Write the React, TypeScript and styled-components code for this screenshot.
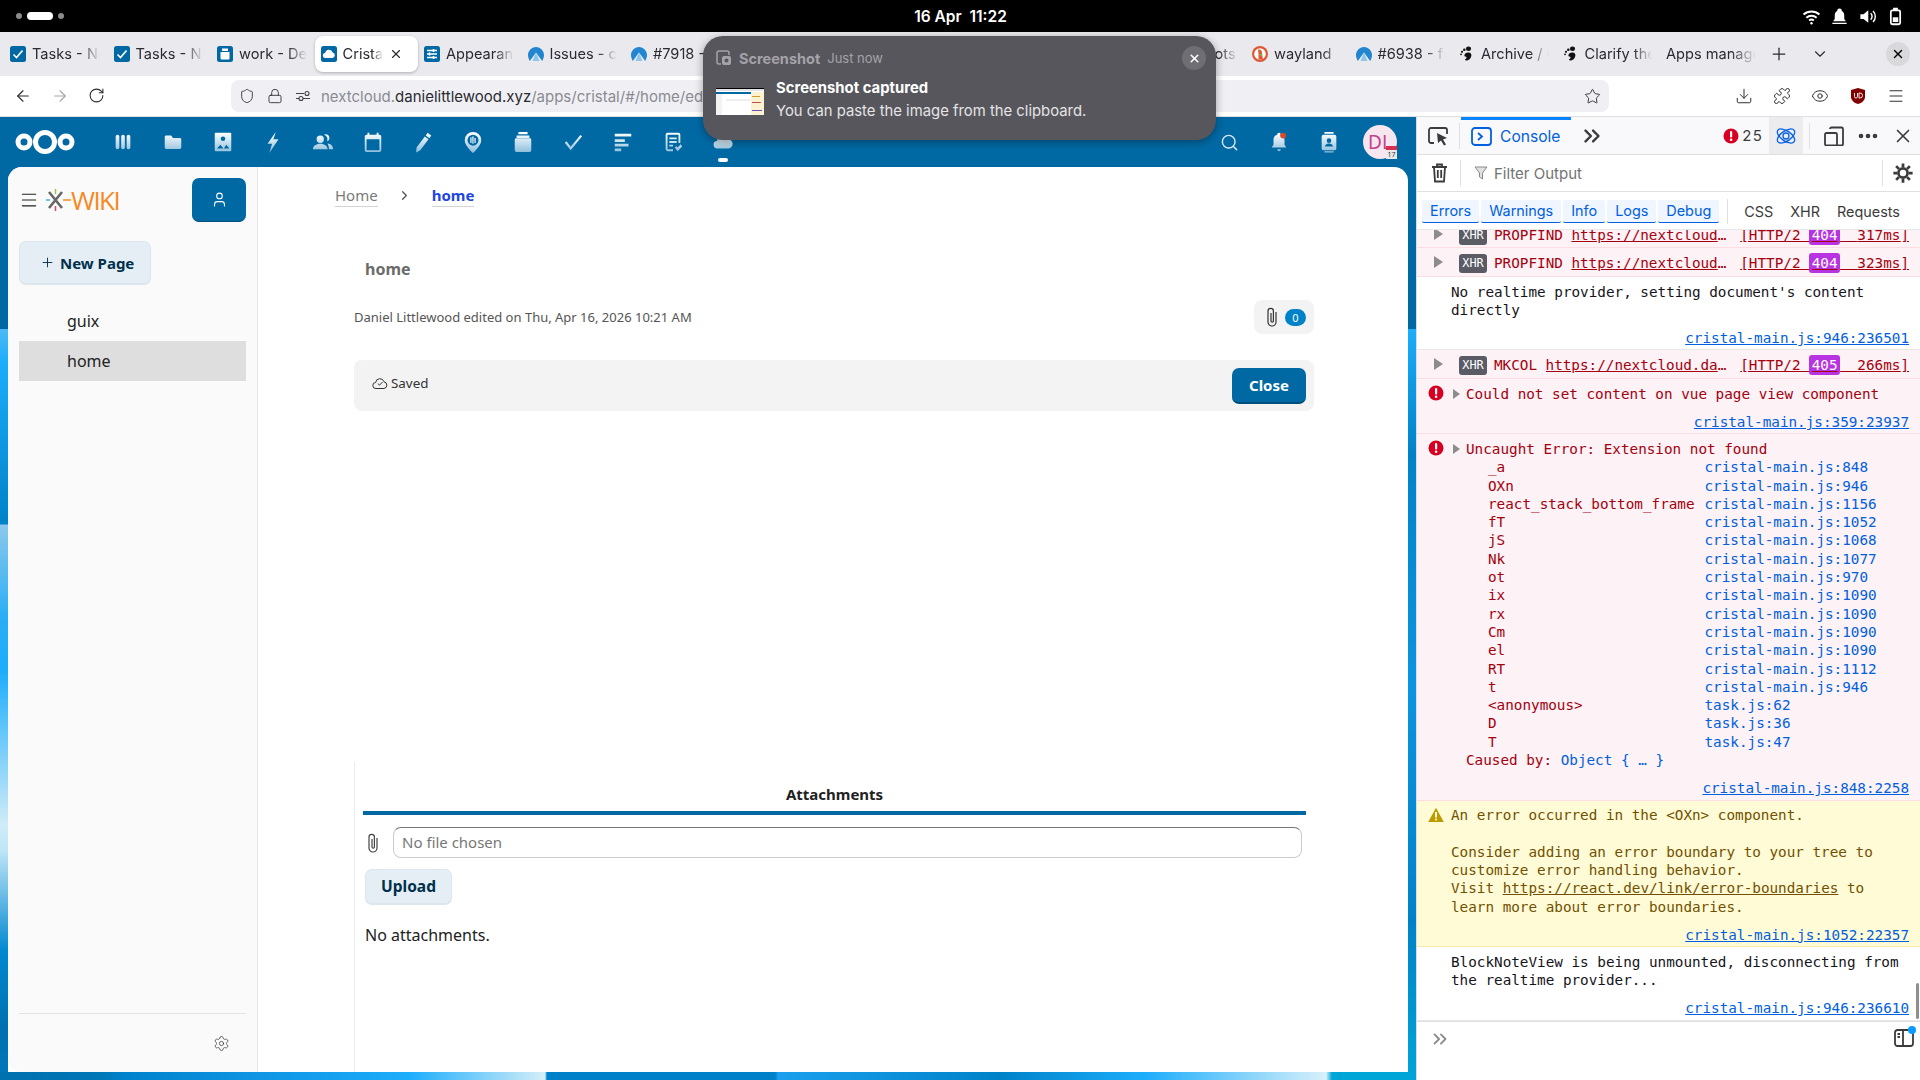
import React from 'react';
import styled, { createGlobalStyle } from 'styled-components';
import {
  ArrowLeft,
  ArrowRight,
  RotateCw,
  Shield,
  Lock,
  Star,
  Download,
  Puzzle,
  Eye,
  Menu,
  X,
  Plus,
  ChevronDown,
  ChevronRight,
  ChevronsRight,
  Settings,
  User,
  Search,
} from 'lucide-react';

const GlobalStyle = createGlobalStyle`
  html, body { margin: 0; padding: 0; width: 1920px; height: 1080px; overflow: hidden; background: #000; }
  * { box-sizing: border-box; }
`;

const UI_FONT = `Inter, "Noto Sans", sans-serif`;
const NC_FONT = `"Noto Sans", "Open Sans", sans-serif`;
const MONO_FONT = `"DejaVu Sans Mono", "Liberation Mono", monospace`;

const Screen = styled.div`
  width: 1920px;
  height: 1080px;
  display: flex;
  flex-direction: column;
  position: relative;
  overflow: hidden;
  font-family: ${UI_FONT};
`;

/* gnome bar */
const TopBar = styled.div`
  height: 32px;
  flex: none;
  background: #000;
  color: #fff;
  display: grid;
  grid-template-columns: 1fr auto 1fr;
  align-items: center;
  padding: 0 15px 0 16px;
`;
const Workspaces = styled.div`
  display: flex;
  align-items: center;
  gap: 5px;
`;
const WsDot = styled.span<{ $on?: boolean }>`
  width: ${p => (p.$on ? '26px' : '6px')};
  height: ${p => (p.$on ? '8px' : '6px')};
  border-radius: 4px;
  background: ${p => (p.$on ? '#fff' : '#8a8a8a')};
`;
const Clock = styled.div`
  font-size: 15.5px;
  font-weight: 600;
  white-space: pre;
`;
const Tray = styled.div`
  display: flex;
  justify-content: flex-end;
  align-items: center;
  gap: 9px;
`;

/* browser chrome */
const TabStrip = styled.div`
  height: 44px;
  flex: none;
  background: #eaeaee;
  display: flex;
  align-items: center;
  padding-left: 4px;
  position: relative;
`;
const Tab = styled.div<{ $active?: boolean }>`
  width: 103.5px;
  height: 36px;
  flex: none;
  display: flex;
  align-items: center;
  gap: 6px;
  padding: 0 ${p => (p.$active ? '15px' : '8px')} 0 6px;
  border-radius: 8px;
  font-size: 14.6px;
  color: #2b2a33;
  background: ${p => (p.$active ? '#fff' : 'transparent')};
  box-shadow: ${p => (p.$active ? '0 1px 3px rgba(0,0,0,.25)' : 'none')};
`;
const TabTitle = styled.span`
  flex: 1;
  overflow: hidden;
  white-space: nowrap;
  mask-image: linear-gradient(to right, #000 72%, transparent 100%);
`;
const Favicon = styled.span`
  width: 16px;
  height: 16px;
  flex: none;
  display: flex;
`;
const TabActions = styled.div`
  display: flex;
  align-items: center;
  color: #2b2a33;
  margin-left: 5px;
  gap: 22px;
`;
const CloseWindow = styled.span`
  position: absolute;
  right: 10px;
  top: 10px;
  width: 24px;
  height: 24px;
  border-radius: 50%;
  background: #d9d9dc;
  display: flex;
  align-items: center;
  justify-content: center;
`;

const NavBar = styled.div`
  height: 41px;
  flex: none;
  background: #fff;
  border-bottom: 1px solid #e0e0e4;
  display: flex;
  align-items: center;
  color: #2b2a33;
`;
const NavButtons = styled.div`
  width: 231px;
  padding-left: 14px;
  display: flex;
  gap: 19px;
  flex: none;
`;
const UrlBar = styled.div`
  width: 1378px;
  height: 32px;
  background: #f0f0f4;
  border-radius: 8px;
  display: flex;
  align-items: center;
  padding: 0 8px 0 8px;
  gap: 12px;
  flex: none;
`;
const UrlText = styled.div`
  flex: 1;
  font-size: 15px;
  color: #8a8a92;
  margin-left: -2px;
  b {
    font-weight: 400;
    color: #2b2a33;
  }
`;
const NavRight = styled.div`
  flex: 1;
  display: flex;
  align-items: center;
  padding-left: 126px;
  gap: 20px;
`;

const Body = styled.div`
  flex: 1;
  display: flex;
  min-height: 0;
`;

/* nextcloud */
const Wallpaper = styled.div`
  width: 1416px;
  flex: none;
  display: flex;
  flex-direction: column;
  background:
    linear-gradient(#0069a3, #0069a3) top / 100% 212px no-repeat,
    linear-gradient(90deg, #0070ae 0, #0076b6 100px, #0082cc 125px, #0f95e4 260px, #1cadfb 409px, #d5eef8 545px, #0080c8 547px, #0080c8 775px, #1aa0ee 778px, #0082c8 1000px, #1cadfb 1144px, #d8f0fa 1326px, #00a5d8 1332px) bottom / 100% 8px no-repeat,
    linear-gradient(180deg, #4ab9f5 215px, #1cadfb 245px, #0082c8 407px, #8cc8ec 408px, #2aaef5 500px, #1cadfb 553px, #d0ecf8 708px, #bfe6f7 733px, #0088d0 835px, #0070ae 913px, #0078bc 100%) left / 8px 100% no-repeat,
    linear-gradient(180deg, #1cadfb 212px, #0082c8 336px, #0d94e0 571px, #0082c8 805px, #00a5d8 100%) right / 8px 100% no-repeat,
    #fff;
`;
const NcHeader = styled.div`
  height: 50px;
  flex: none;
  display: flex;
  align-items: center;
  padding-left: 15px;
`;
const AppIcons = styled.div`
  display: flex;
  margin-left: 23px;
`;
const AppIcon = styled.span`
  width: 50px;
  height: 50px;
  display: flex;
  align-items: center;
  justify-content: center;
  position: relative;
`;
const ActiveDot = styled.span`
  position: absolute;
  left: 20px;
  bottom: 5px;
  width: 10px;
  height: 4px;
  border-radius: 2px;
  background: #fff;
`;
const HeaderRight = styled.div`
  margin-left: auto;
  display: flex;
  align-items: center;
  padding-right: 19px;
`;
const Avatar = styled.span`
  width: 34px;
  height: 34px;
  margin-left: 9px;
  border-radius: 50%;
  background: #f6e6ef;
  color: #c2438f;
  font: 400 19px ${NC_FONT};
  display: flex;
  align-items: center;
  justify-content: center;
  position: relative;
`;
const AvatarBadge = styled.span`
  position: absolute;
  right: 0;
  bottom: 0;
  width: 11px;
  height: 13px;
  background: linear-gradient(#d9304f 0 4px, #e9e9e9 4px);
  color: #333;
  font-size: 7px;
  line-height: 17px;
  text-align: center;
`;

const Panel = styled.div`
  height: 905px;
  margin: 0 8px;
  border-radius: 14px;
  background: #fff;
  overflow: hidden;
  display: flex;
`;

const Sidebar = styled.aside`
  width: 250px;
  flex: none;
  background: #fafafa;
  border-right: 1px solid #e6e6e6;
  padding: 11px 11px 0;
  display: flex;
  flex-direction: column;
  font-family: ${NC_FONT};
`;
const SideTop = styled.div`
  display: flex;
  align-items: center;
  height: 44px;
  color: #222;
`;
const Logo = styled.div`
  display: flex;
  align-items: center;
  margin-left: 7px;
  color: #f6891f;
  font: 400 26px/1 "Open Sans", ${NC_FONT};
  letter-spacing: -1.6px;
`;
const UserButton = styled.button`
  margin-left: auto;
  width: 54px;
  height: 44px;
  border: 0;
  border-bottom: 1px solid #004f7b;
  border-radius: 7px;
  background: #0069a3;
  color: #fff;
  display: flex;
  align-items: center;
  justify-content: center;
`;
const SoftButton = styled.button`
  display: flex;
  align-items: center;
  gap: 5px;
  border: 1px solid #dce6ef;
  border-bottom-width: 2px;
  border-radius: 7px;
  background: #e6eef5;
  color: #00304c;
  font: 700 15px ${NC_FONT};
`;
const NewPage = styled(SoftButton)`
  width: 132px;
  height: 44px;
  margin-top: 19px;
  padding-left: 20px;
`;
const TreeList = styled.div`
  margin-top: 16px;
`;
const TreeItem = styled.div<{ $selected?: boolean }>`
  height: 40px;
  line-height: 40px;
  padding-left: 48px;
  font-size: 16px;
  color: #222;
  background: ${p => (p.$selected ? '#dedede' : 'transparent')};
`;
const SideFooter = styled.div`
  margin-top: auto;
  height: 59px;
  border-top: 1px solid #e4e4e4;
  display: flex;
  justify-content: flex-end;
  align-items: center;
  padding: 0 16px 0 0;
  color: #333;
`;

const Main = styled.main`
  flex: 1;
  min-width: 0;
  display: flex;
  flex-direction: column;
  padding: 16px 94px 0 96px;
  font-family: ${NC_FONT};
  color: #222;
`;
const Crumbs = styled.nav`
  display: flex;
  align-items: center;
  margin-left: -19px;
  height: 24px;
  font-size: 15px;
`;
const Crumb = styled.span<{ $current?: boolean }>`
  color: ${p => (p.$current ? '#2146e0' : '#7a7a7a')};
  font-weight: ${p => (p.$current ? 700 : 400)};
  border-bottom: 1px solid #d4d4d4;
  line-height: 22px;
`;
const CrumbSep = styled.span`
  width: 54px;
  color: #555;
  display: flex;
  justify-content: center;
`;
const PageTitle = styled.h1`
  margin: 50px 0 0 11px;
  font-size: 16px;
  line-height: 24px;
  font-weight: 700;
  color: #6b6b6b;
`;
const MetaRow = styled.div`
  margin-top: 19px;
  height: 34px;
  display: flex;
  align-items: center;
  justify-content: space-between;
  font-size: 13px;
  color: #555;
`;
const AttachPill = styled.div`
  width: 60px;
  height: 34px;
  border-radius: 8px;
  background: #f3f3f3;
  display: flex;
  align-items: center;
  padding-left: 11px;
  gap: 6px;
  color: #333;
`;
const CountBadge = styled.span`
  width: 21px;
  height: 17px;
  border-radius: 9px;
  background: #0082c9;
  color: #fff;
  font-size: 11px;
  display: flex;
  align-items: center;
  justify-content: center;
`;
const SaveBar = styled.div`
  margin-top: 26px;
  height: 51px;
  border-radius: 8px;
  background: #f3f3f3;
  display: flex;
  align-items: center;
  padding: 0 8px 0 18px;
`;
const Saved = styled.span`
  display: flex;
  align-items: center;
  gap: 3px;
  font-size: 13.4px;
  color: #333;
  margin-top: -5px;
`;
const CloseButton = styled.button`
  margin-left: auto;
  width: 74px;
  height: 36px;
  border: 0;
  border-bottom: 2px solid #004f7b;
  border-radius: 7px;
  background: #0069a3;
  color: #fff;
  font: 700 15px ${NC_FONT};
`;
const Attachments = styled.section`
  margin-top: 351px;
  flex: 1;
  border-left: 1px solid #ececec;
  padding: 20px 8px 0 8px;
`;
const AttachTitle = styled.div`
  height: 24px;
  line-height: 24px;
  text-align: center;
  font-size: 15px;
  font-weight: 700;
  margin-bottom: 5px;
`;
const TabLine = styled.div`
  height: 4px;
  background: #0069a3;
`;
const FileRow = styled.div`
  margin-top: 12px;
  display: flex;
  align-items: center;
  color: #444;
  padding-left: 3px;
`;
const FileInput = styled.div`
  margin-left: 13px;
  width: 909px;
  height: 31px;
  border: 1px solid #ccc;
  border-top-color: #777;
  border-radius: 8px;
  padding-left: 8px;
  font-size: 15px;
  line-height: 29px;
  color: #777;
`;
const Upload = styled(SoftButton)`
  margin: 11px 0 0 2px;
  width: 87px;
  height: 36px;
  padding: 0 0 1px;
  justify-content: center;
  font-size: 15.5px;
`;
const EmptyNote = styled.div`
  margin: 18px 0 0 2px;
  font-size: 16px;
  line-height: 24px;
`;

/* devtools */
const Devtools = styled.div`
  flex: 1;
  min-width: 0;
  display: flex;
  flex-direction: column;
  background: #fff;
  border-left: 1px solid #dcdcdc;
  color: #3b3b3b;
  position: relative;
`;
const DevBar = styled.div`
  height: 38px;
  flex: none;
  background: #f9f9fb;
  border-bottom: 1px solid #e0e0e2;
  display: flex;
  align-items: center;
  padding-left: 10px;
`;
const DevSep = styled.span<{ $left?: number; $right?: number }>`
  width: 1px;
  height: 26px;
  background: #e0e0e2;
  flex: none;
  margin-left: ${p => p.$left ?? 0}px;
  margin-right: ${p => p.$right ?? 0}px;
`;
const ConsoleTab = styled.div`
  width: 110px;
  height: 37px;
  border-top: 3px solid #0a84ff;
  margin-left: 1px;
  display: flex;
  align-items: center;
  gap: 8px;
  padding: 0 0 2px 10px;
  color: #0060df;
  font-size: 15.6px;
`;
const MoreTabs = styled.span`
  display: flex;
  margin-left: 8px;
`;
const ErrorCount = styled.div`
  margin-left: auto;
  display: flex;
  align-items: center;
  gap: 3px;
  font-size: 15px;
  letter-spacing: 1.2px;
`;
const AtomButton = styled.span`
  width: 34px;
  height: 37px;
  margin: 0 6px;
  background: #ececef;
  display: flex;
  align-items: center;
  justify-content: center;
`;
const DevTools2 = styled.div`
  display: flex;
  align-items: center;
  gap: 14px;
  padding: 0 6px 0 14px;
`;
const FilterBar = styled.div`
  height: 37px;
  flex: none;
  border-bottom: 1px solid #e0e0e2;
  display: flex;
  align-items: center;
  padding-left: 14px;
  gap: 12px;
`;
const FilterText = styled.span`
  flex: 1;
  display: flex;
  align-items: center;
  gap: 6px;
  font-size: 15px;
  color: #737373;
  padding-left: 1px;
`;
const GearWrap = styled.span`
  display: flex;
  margin-right: 6px;
`;
const LevelBar = styled.div`
  height: 37px;
  flex: none;
  display: flex;
  align-items: center;
  padding: 1px 5px 0;
  gap: 2px;
  font-size: 14.4px;
`;
const Level = styled.span`
  height: 23px;
  padding: 0 8px;
  line-height: 22px;
  border-radius: 2px;
  background: #f0f6ff;
  color: #0060df;
  border-bottom: 1px solid #0060df;
`;
const Net = styled.span<{ $gap?: number }>`
  margin-left: ${p => p.$gap ?? 15}px;
`;
const LevelSep = styled.span`
  width: 1px;
  height: 25px;
  background: #e0e0e2;
  margin: 0 0 0 6px;
`;
const Output = styled.div`
  flex: 1;
  min-height: 0;
  overflow: hidden;
  font: 14.3px/18.3px ${MONO_FONT};
  border-top: 1px solid #e8e8ea;
  position: relative;
`;
const Row = styled.div<{ $kind?: 'error' | 'warn' | 'log' }>`
  background: ${p => (p.$kind === 'error' ? '#fdf2f5' : p.$kind === 'warn' ? '#fffbd6' : '#fff')};
  color: ${p => (p.$kind === 'error' ? '#a4000f' : p.$kind === 'warn' ? '#715100' : '#15141a')};
  border-bottom: 1px solid ${p => (p.$kind === 'error' ? '#fbdde3' : p.$kind === 'warn' ? '#f6eca8' : '#e8e8ea')};
  position: relative;
  padding: 5.5px 11px 0 34px;
`;
const XhrRow = styled(Row)<{ $clipped?: boolean }>`
  height: ${p => (p.$clipped ? 18 : 29)}px;
  display: flex;
  align-items: flex-end;
  padding: 0 11px ${p => (p.$clipped ? 3 : 4)}px 17px;
  white-space: pre;
  overflow: hidden;
`;
const Twisty = styled.span`
  width: 0;
  height: 0;
  border-left: 9px solid #8c8c8c;
  border-top: 6px solid transparent;
  border-bottom: 6px solid transparent;
  margin: 0 16px 4px 0;
  flex: none;
`;
const XhrTag = styled.span`
  background: #5b5b66;
  color: #fff;
  border-radius: 3px;
  width: 28px;
  height: 19px;
  line-height: 19px;
  text-align: center;
  font-size: 11.9px;
  margin: 0 7px -1px 0;
  flex: none;
`;
const XhrUrl = styled.span`
  flex: 1;
  min-width: 0;
  overflow: hidden;
  text-overflow: ellipsis;
  text-decoration: underline;
  margin-left: 8.5px;
  margin-right: 12px;
`;
const Status = styled.span`
  text-decoration: underline;
  flex: none;
`;
const Code = styled.span`
  background: #b833e1;
  color: #fff;
  border-radius: 3px;
  padding: 2px 2.6px;
`;
const Msg = styled.div`
  white-space: pre-wrap;
`;
const ErrorLine = styled.div`
  padding-left: 15px;
  position: relative;
`;
const SmallTwisty = styled.span`
  position: absolute;
  left: 2px;
  top: 4px;
  width: 0;
  height: 0;
  border-left: 7px solid #8c8c8c;
  border-top: 5px solid transparent;
  border-bottom: 5px solid transparent;
`;
const StateIcon = styled.span`
  position: absolute;
  left: 11px;
  top: 6px;
  width: 16px;
  height: 16px;
  display: flex;
`;
const Source = styled.a`
  display: block;
  text-align: right;
  color: #0060df;
  text-decoration: underline;
  margin-top: 10px;
  padding-bottom: 2px;
`;
const Stack = styled.div`
  display: grid;
  grid-template-columns: 216.5px auto;
  justify-content: start;
  padding-left: 37px;
`;
const FrameFile = styled.span`
  color: #0060df;
`;
const Caused = styled.div`
  padding-left: 15px;
`;
const Blue = styled.span`
  color: #0060df;
`;
const PlainLink = styled.span`
  text-decoration: underline;
`;
const Scrollbar = styled.span`
  position: absolute;
  right: 1px;
  bottom: 2px;
  width: 3px;
  height: 36px;
  border-radius: 2px;
  background: #8f8f8f;
`;
const PromptBar = styled.div`
  height: 59px;
  flex: none;
  border-top: 1px solid #e0e0e2;
  display: flex;
  align-items: flex-start;
  justify-content: space-between;
  padding: 6px 6px 0 12px;
  color: #8a8a8a;
`;
const SplitIcon = styled.span`
  position: relative;
  display: flex;
  margin-top: 1px;
  color: #3b3b3b;
`;
const BlueDot = styled.span`
  position: absolute;
  right: -2px;
  top: -3px;
  width: 8px;
  height: 8px;
  border-radius: 50%;
  background: #0a9bff;
`;

/* desktop notification */
const Toast = styled.div`
  position: absolute;
  left: 703px;
  top: 36px;
  width: 513px;
  height: 104px;
  border-radius: 20px;
  background: #57565c;
  box-shadow: 0 2px 8px rgba(0, 0, 0, 0.35);
  padding: 13px 10px 0 13px;
  color: #fff;
`;
const ToastHead = styled.div`
  display: flex;
  align-items: center;
  height: 18px;
  color: #a4a3a9;
  gap: 7px;
`;
const ToastApp = styled.span`
  font-size: 14.5px;
  font-weight: 700;
`;
const ToastTime = styled.span`
  font-size: 13px;
`;
const ToastClose = styled.span`
  position: absolute;
  right: 10px;
  top: 10px;
  width: 24px;
  height: 24px;
  border-radius: 50%;
  background: #6f6e74;
  display: flex;
  align-items: center;
  justify-content: center;
`;
const ToastBody = styled.div`
  display: flex;
  align-items: flex-start;
  gap: 12px;
  margin-top: 10px;
`;
const Thumb = styled.svg`
  margin-top: 11px;
  flex: none;
`;
const ToastText = styled.div`
  font-size: 14.85px;
  line-height: 23px;
  color: #e4e4e6;
  b {
    display: block;
    color: #fff;
    font-weight: 700;
  }
`;

const HeaderDefs = () => (
  <svg width="0" height="0" style={{ position: 'absolute' }}>
    <defs>
      <linearGradient id="hdr" gradientUnits="userSpaceOnUse" x1="0" y1="2" x2="0" y2="23">
        <stop offset="0" stopColor="#ffffff" />
        <stop offset="1" stopColor="#8fbfdc" />
      </linearGradient>
    </defs>
  </svg>
);

const Ico = ({ children, size = 24 }: { children: React.ReactNode; size?: number }) => (
  <svg width={size} height={size} viewBox="0 0 24 24" fill="url(#hdr)">
    {children}
  </svg>
);

const appIcons: React.ReactNode[] = [
  <path key="d" d="M4 6a2 2 0 0 1 4 0v12a2 2 0 0 1-4 0zM10 6a2 2 0 0 1 4 0v12a2 2 0 0 1-4 0zM16 6a2 2 0 0 1 4 0v12a2 2 0 0 1-4 0z" />,
  <path key="f" d="M3 6.500C3 5.700 3.700 5 4.500 5H10l2 2.500h7.500c.8 0 1.500.7 1.500 1.500V18c0 .8-.7 1.500-1.500 1.500h-15C3.700 19.500 3 18.800 3 18z" />,
  <path key="p" fillRule="evenodd" d="M4 2h16a1 1 0 0 1 1 1v18a1 1 0 0 1-1 1H4a1 1 0 0 1-1-1V3a1 1 0 0 1 1-1zm8 4a2.500 2.500 0 1 0 0 5 2.500 2.500 0 0 0 0-5zm3.500 9-2.500 4h6zm-6.500 0-3.500 4h7z" />,
  <path key="a" d="M15 1 6 14h5l-3 10 10-15h-5.500z" />,
  <path key="c" d="M9 5a4 4 0 1 1 0 8 4 4 0 0 1 0-8zm6-1.500a4 4 0 0 1 1.500 7.700A6 6 0 0 0 13 4zM1 20c0-3.500 3.500-6 8-6s8 2.500 8 6zm16-6.500c3.500.3 6 2.500 6 6.500h-4.500c0-2.500-.5-4.500-1.500-6.500z" />,
  <path key="k" fillRule="evenodd" d="M6 2h2v2h8V2h2v2h1a2 2 0 0 1 2 2v15a2 2 0 0 1-2 2H5a2 2 0 0 1-2-2V6a2 2 0 0 1 2-2h1zM5 9v12h14V9z" />,
  <path key="n" d="M17 2l4 3-2 3-4-3zM14 6l4 3-9 12-4.500 2.500L5 18z" />,
  <path key="m" fillRule="evenodd" d="M12 1a9 9 0 0 1 9 9c0 5-5 10-9 14-4-4-9-9-9-14a9 9 0 0 1 9-9zm0 3a6 6 0 1 0 0 12 6 6 0 0 0 0-12zM9 7h1.500v6H9zm2.200-1h1.500v8h-1.500zm2.300 1.500H15V13h-1.500z" />,
  <path key="s" d="M7 1h10v2.500H7zM5 5h14v2.500H5zM3 9.500a1.500 1.500 0 0 1 1.500-1.500h15A1.500 1.500 0 0 1 21 9.500V21a2 2 0 0 1-2 2H5a2 2 0 0 1-2-2z" />,
  <path key="t" fill="none" stroke="url(#hdr)" strokeWidth="2.400" d="M4 12l5.500 7L21 5" />,
  <path key="x" d="M3 3h18v3H3zM3 9h11v3H3zM3 14h15v3H3zM3 19h7v3H3z" />,
  <path key="o" fillRule="evenodd" d="M6 2h12a2 2 0 0 1 2 2v9h-2V4H6v16h6v2H6a2 2 0 0 1-2-2V4a2 2 0 0 1 2-2zm2 5h8v2H8zm0 4h8v2H8zm0 4h4v2H8zm6 3 1.500-1.500 1.500 1.500 3.500-3.500L22 17l-5 5z" />,
];

const Tasks = () => (
  <svg viewBox="0 0 16 16" width="16" height="16">
    <rect width="16" height="16" rx="2.500" fill="#0069a3" />
    <path d="M3.500 8.500l3 3L12.500 4.500" fill="none" stroke="#fff" strokeWidth="1.600" />
  </svg>
);
const BlueJar = () => (
  <svg viewBox="0 0 16 16" width="16" height="16">
    <rect width="16" height="16" rx="2.500" fill="#0069a3" />
    <path d="M5 2.500h6V5H5zM3.500 6h9v6.500a1 1 0 0 1-1 1h-7a1 1 0 0 1-1-1z" fill="#fff" />
  </svg>
);
const BlueCloud = () => (
  <svg viewBox="0 0 16 16" width="16" height="16">
    <rect width="16" height="16" rx="2.500" fill="#0069a3" />
    <path d="M4.500 12a2.500 2.500 0 0 1-.3-5A3.800 3.800 0 0 1 11.600 6.500 2.800 2.800 0 0 1 11.500 12z" fill="#fff" />
  </svg>
);
const BlueSliders = () => (
  <svg viewBox="0 0 16 16" width="16" height="16">
    <rect width="16" height="16" rx="2.500" fill="#0069a3" />
    <path d="M3 4.500h10M3 8h10M3 11.500h10" stroke="#fff" strokeWidth="1.300" />
    <path d="M9.500 3v3M5.500 6.500v3M9.500 10v3" stroke="#fff" strokeWidth="1.600" />
  </svg>
);
const Arch = () => (
  <svg viewBox="0 0 16 16" width="16" height="16">
    <path d="M8 1C3.500 1 0 5 0 9c0 2 .7 4 1.800 6L8 6.500 14.200 15C15.300 13 16 11 16 9c0-4-3.500-8-8-8z" fill="#2185d0" />
    <path d="M8 6.500 4.500 15h7z" fill="#8ec6ee" />
  </svg>
);
const Duck = () => (
  <svg viewBox="0 0 16 16" width="16" height="16">
    <circle cx="8" cy="8" r="8" fill="#de5833" />
    <circle cx="8" cy="8" r="5.800" fill="#fff" />
    <path d="M6 3.500c3-.5 4.500 1.500 4 5l1 5H6.500L6.500 8z" fill="#de5833" />
    <path d="M7 8h4L9 10z" fill="#6fbf3a" />
  </svg>
);
const Gnome = () => (
  <svg viewBox="0 0 16 16" width="16" height="16">
    <path d="M9 6.500c3 0 4 2 3 4.500-.8 2-2.500 3.500-4.500 3.500-1.500 0-2-1-1-1.500 2-1 1-2.500-.5-2.500C5 10.500 5 6.500 9 6.500z" fill="#111" />
    <ellipse cx="9.500" cy="2.800" rx="2.600" ry="2.200" fill="#111" />
    <circle cx="5.300" cy="3.800" r="1.300" fill="#111" />
    <circle cx="3" cy="5.800" r="1.100" fill="#111" />
    <circle cx="2" cy="8.300" r=".9" fill="#111" />
  </svg>
);

const tabs: { title?: string; icon?: React.ReactNode; active?: boolean }[] = [
  { title: 'Tasks - Nextcloud', icon: <Tasks /> },
  { title: 'Tasks - Nextcloud', icon: <Tasks /> },
  { title: 'work - Deck', icon: <BlueJar /> },
  { title: 'Cristal', icon: <BlueCloud />, active: true },
  { title: 'Appearance', icon: <BlueSliders /> },
  { title: 'Issues - codeberg', icon: <Arch /> },
  { title: '#7918 - fix', icon: <Arch /> },
  {},
  {},
  {},
  {},
  { title: 'Web bots', icon: <Tasks /> },
  { title: 'wayland', icon: <Duck /> },
  { title: '#6938 - fix', icon: <Arch /> },
  { title: 'Archive / GNOME', icon: <Gnome /> },
  { title: 'Clarify the', icon: <Gnome /> },
  { title: 'Apps management' },
];

const frames: [string, string][] = [
  ['_a', 'cristal-main.js:848'],
  ['OXn', 'cristal-main.js:946'],
  ['react_stack_bottom_frame', 'cristal-main.js:1156'],
  ['fT', 'cristal-main.js:1052'],
  ['jS', 'cristal-main.js:1068'],
  ['Nk', 'cristal-main.js:1077'],
  ['ot', 'cristal-main.js:970'],
  ['ix', 'cristal-main.js:1090'],
  ['rx', 'cristal-main.js:1090'],
  ['Cm', 'cristal-main.js:1090'],
  ['el', 'cristal-main.js:1090'],
  ['RT', 'cristal-main.js:1112'],
  ['t', 'cristal-main.js:946'],
  ['<anonymous>', 'task.js:62'],
  ['D', 'task.js:36'],
  ['T', 'task.js:47'],
];

const Paperclip = () => (
  <svg width="14" height="20" viewBox="0 0 14 20" fill="none" stroke="currentColor" strokeWidth="1.200">
    <path d="M11 5v10a4 4 0 0 1-8 0V4a2.700 2.700 0 0 1 5.400 0v10a1.200 1.200 0 0 1-2.400 0V6" />
  </svg>
);

const CloudCheck = () => (
  <svg width="16" height="14" viewBox="0 0 16 14" fill="none" stroke="#333" strokeWidth="1">
    <path d="M4 12.500a3 3 0 0 1-.4-6A4.300 4.300 0 0 1 12 5.800a3.400 3.400 0 0 1 0 6.700z" />
    <path d="M5.800 7.500l1.700 1.700 3-3.200" />
  </svg>
);

const ErrorDot = ({ size = 16 }: { size?: number }) => (
  <svg width={size} height={size} viewBox="0 0 16 16">
    <circle cx="8" cy="8" r="7.500" fill="#d70022" />
    <rect x="7" y="3" width="2.200" height="6.500" rx="1" fill="#fff" />
    <circle cx="8.100" cy="11.800" r="1.300" fill="#fff" />
  </svg>
);

const WarnIcon = () => (
  <svg width="16" height="16" viewBox="0 0 16 16">
    <path d="M8 .8 15.800 15H.2z" fill="#be9b00" />
    <rect x="7" y="5" width="2" height="5.500" fill="#fffbd6" />
    <circle cx="8" cy="12.500" r="1.100" fill="#fffbd6" />
  </svg>
);

const XhrLine = ({ method, url, code, ms, clipped }: { method: string; url: string; code: string; ms: string; clipped?: boolean }) => (
  <XhrRow $kind="error" $clipped={clipped}>
    <Twisty />
    <XhrTag>XHR</XhrTag>
    {method}
    <XhrUrl>{url}</XhrUrl>
    <Status>
      [HTTP/2 <Code>{code}</Code>  {ms}]
    </Status>
  </XhrRow>
);

export default function App() {
  return (
    <Screen>
      <GlobalStyle />
      <HeaderDefs />
      <TopBar>
        <Workspaces>
          <WsDot />
          <WsDot $on />
          <WsDot />
        </Workspaces>
        <Clock>16 Apr  11:22</Clock>
        <Tray>
          <svg width="19" height="19" viewBox="0 0 24 24" fill="none" stroke="#fff" strokeWidth="2.600">
            <path d="M2 9.500a15 15 0 0 1 20 0M5.500 13.500a10 10 0 0 1 13 0M9 17a5 5 0 0 1 6 0" />
            <circle cx="12" cy="20.500" r="1.500" fill="#fff" stroke="none" />
          </svg>
          <svg width="19" height="19" viewBox="0 0 24 24" fill="#fff">
            <path d="M12 2a3 3 0 0 1 3 3c2 1 3 3 3 6v4l2 3H4l2-3v-4c0-3 1-5 3-6a3 3 0 0 1 3-3zM3 20h18v1.500H3z" />
          </svg>
          <svg width="19" height="19" viewBox="0 0 24 24" fill="#fff">
            <path d="M3 9h4l6-5v16l-6-5H3z" />
            <path d="M16 8a6 6 0 0 1 0 8M19 5a10 10 0 0 1 0 14" fill="none" stroke="#fff" strokeWidth="1.800" />
          </svg>
          <svg width="19" height="19" viewBox="0 0 24 24">
            <path fillRule="evenodd" fill="#fff" d="M9 1h6v2h1a3 3 0 0 1 3 3v14a3 3 0 0 1-3 3H8a3 3 0 0 1-3-3V6a3 3 0 0 1 3-3h1zM8 5.500a.8.8 0 0 0-.8.800v13.400c0 .4.400.8.800.8h8c.4 0 .8-.4.8-.8V6.300a.8.8 0 0 0-.8-.8z" />
            <rect x="8.500" y="13" width="7" height="6" fill="#fff" />
          </svg>
        </Tray>
      </TopBar>

      <TabStrip>
        {tabs.map((t, i) => (
          <Tab key={i} $active={t.active}>
            {t.icon && <Favicon>{t.icon}</Favicon>}
            {t.title && <TabTitle>{t.title}</TabTitle>}
            {t.active && <X size={14} />}
          </Tab>
        ))}
        <TabActions>
          <Plus size={20} strokeWidth={1.500} />
          <ChevronDown size={18} strokeWidth={1.500} />
        </TabActions>
        <CloseWindow>
          <X size={14} strokeWidth={2.500} />
        </CloseWindow>
      </TabStrip>

      <NavBar>
        <NavButtons>
          <ArrowLeft size={18} strokeWidth={1.500} />
          <ArrowRight size={18} strokeWidth={1.500} color="#a8a8ae" />
          <RotateCw size={17} strokeWidth={1.500} />
        </NavButtons>
        <UrlBar>
          <Shield size={16} strokeWidth={1.300} />
          <Lock size={16} strokeWidth={1.300} />
          <svg width="16" height="16" viewBox="0 0 16 16" fill="none" stroke="#444" strokeWidth="1.100">
            <path d="M1 5.500h8M1 10.500h3M8 10.500h7" />
            <circle cx="12" cy="5.500" r="2" />
            <circle cx="6" cy="10.500" r="2" />
          </svg>
          <UrlText>
            nextcloud.<b>danielittlewood.xyz</b>/apps/cristal/#/home/edit
          </UrlText>
          <Star size={17} strokeWidth={1.300} />
        </UrlBar>
        <NavRight>
          <Download size={18} strokeWidth={1.300} />
          <Puzzle size={18} strokeWidth={1.300} />
          <Eye size={18} strokeWidth={1.300} />
          <svg width="18" height="18" viewBox="0 0 18 18">
            <path d="M9 1 16 3v7c0 3-3 6-7 7-4-1-7-4-7-7V3z" fill="#800000" />
            <path d="M5.500 6v3.500a1.500 1.500 0 0 0 3 0V6M10 6v5h1a2.500 2.500 0 0 0 0-5z" fill="none" stroke="#fff" strokeWidth=".9" />
          </svg>
          <Menu size={18} strokeWidth={1.300} />
        </NavRight>
      </NavBar>

      <Body>
        <Wallpaper>
          <NcHeader>
            <svg width="60" height="30" viewBox="0 0 60 30" fill="none" stroke="#fff" strokeWidth="5">
              <circle cx="9" cy="15" r="6" />
              <circle cx="30" cy="15" r="9.500" />
              <circle cx="51" cy="15" r="6" />
            </svg>
            <AppIcons>
              {appIcons.map((icon, i) => (
                <AppIcon key={i}>
                  <Ico size={22}>{icon}</Ico>
                </AppIcon>
              ))}
              <AppIcon>
                <Ico size={22}>
                  <path d="M6 19a4 4 0 0 1-.5-8A6 6 0 0 1 17 9a5 5 0 0 1 1 10z" />
                </Ico>
                <ActiveDot />
              </AppIcon>
            </AppIcons>
            <HeaderRight>
              <AppIcon>
                <Search size={19} color="#d8e8f2" strokeWidth={1.800} />
              </AppIcon>
              <AppIcon>
                <Ico size={22}>
                  <path d="M12 2a2 2 0 0 1 2 2c3 1 4 3 4 6v5l2 3H4l2-3v-5c0-3 1-5 4-6a2 2 0 0 1 2-2zM10 20h4a2 2 0 0 1-4 0z" />
                  <circle cx="16.500" cy="5" r="3.200" fill="#d9492a" />
                </Ico>
              </AppIcon>
              <AppIcon>
                <Ico size={22}>
                  <path fillRule="evenodd" d="M7 1h10v2H7zM6 4h12a2 2 0 0 1 2 2v13a2 2 0 0 1-2 2H6a2 2 0 0 1-2-2V6a2 2 0 0 1 2-2zm6 4a2.500 2.500 0 1 0 0 5 2.500 2.500 0 0 0 0-5zm-4.500 9h9c0-2-2-3.500-4.500-3.500S7.500 15 7.500 17zM7 22h10v1.500H7z" />
                </Ico>
              </AppIcon>
              <Avatar>
                DL
                <AvatarBadge>17</AvatarBadge>
              </Avatar>
            </HeaderRight>
          </NcHeader>

          <Panel>
            <Sidebar>
              <SideTop>
                <Menu size={20} strokeWidth={1.300} />
                <Logo>
                  <svg width="25" height="22" viewBox="0 0 25 22" fill="none" strokeWidth="2.600">
                    <path d="M3 3l13 16M16 3 3 19" stroke="#666" />
                    <path d="M9.500 0v5" stroke="#9ac73c" strokeWidth="1.500" />
                    <path d="M9.500 17v5" stroke="#e8425c" strokeWidth="1.500" />
                    <path d="M0 11h4" stroke="#3fb1e5" strokeWidth="1.500" />
                    <path d="M17 11h8" stroke="#f6891f" strokeWidth="1.500" />
                  </svg>
                  WIKI
                </Logo>
                <UserButton>
                  <User size={17} strokeWidth={1.500} />
                </UserButton>
              </SideTop>
              <NewPage>
                <Plus size={15} strokeWidth={1.500} />
                New Page
              </NewPage>
              <TreeList>
                <TreeItem>guix</TreeItem>
                <TreeItem $selected>home</TreeItem>
              </TreeList>
              <SideFooter>
                <Settings size={17} strokeWidth={1} />
              </SideFooter>
            </Sidebar>

            <Main>
              <Crumbs>
                <Crumb>Home</Crumb>
                <CrumbSep>
                  <ChevronRight size={15} />
                </CrumbSep>
                <Crumb $current>home</Crumb>
              </Crumbs>
              <PageTitle>home</PageTitle>
              <MetaRow>
                Daniel Littlewood edited on Thu, Apr 16, 2026 10:21 AM
                <AttachPill>
                  <Paperclip />
                  <CountBadge>0</CountBadge>
                </AttachPill>
              </MetaRow>
              <SaveBar>
                <Saved>
                  <CloudCheck />
                  Saved
                </Saved>
                <CloseButton>Close</CloseButton>
              </SaveBar>
              <Attachments>
                <AttachTitle>Attachments</AttachTitle>
                <TabLine />
                <FileRow>
                  <Paperclip />
                  <FileInput>No file chosen</FileInput>
                </FileRow>
                <Upload>Upload</Upload>
                <EmptyNote>No attachments.</EmptyNote>
              </Attachments>
            </Main>
          </Panel>
        </Wallpaper>

        <Devtools>
          <DevBar>
            <svg width="22" height="22" viewBox="0 0 22 22" fill="none" stroke="#3b3b3b" strokeWidth="1.800">
              <path d="M7 18H4a2 2 0 0 1-2-2V5a2 2 0 0 1 2-2h14a2 2 0 0 1 2 2v4" />
              <path d="M10 8l10 5-4 1.500 3 5-2 1-3-5-3 2.500z" fill="#3b3b3b" stroke="none" />
            </svg>
            <DevSep $left={10} />
            <ConsoleTab>
              <svg width="21" height="19" viewBox="0 0 21 19" fill="none" stroke="#0060df" strokeWidth="1.800">
                <rect x="1" y="1" width="19" height="17" rx="3" />
                <path d="M7 6l4 3.500L7 13" />
              </svg>
              Console
            </ConsoleTab>
            <MoreTabs>
              <ChevronsRight size={26} strokeWidth={2.200} />
            </MoreTabs>
            <ErrorCount>
              <ErrorDot />
              25
            </ErrorCount>
            <AtomButton>
              <svg width="22" height="22" viewBox="0 0 22 22" fill="none" stroke="#0a64e0" strokeWidth="1.300">
                <ellipse cx="11" cy="11" rx="10" ry="5" transform="rotate(35 11 11)" />
                <ellipse cx="11" cy="11" rx="10" ry="5" transform="rotate(-35 11 11)" />
                <circle cx="11" cy="11" r="3" />
              </svg>
            </AtomButton>
            <DevSep />
            <DevTools2>
              <svg width="20" height="20" viewBox="0 0 20 20" fill="none" stroke="#3b3b3b" strokeWidth="1.800">
                <path d="M6 3a1.500 1.500 0 0 1 1.500-1.500h10A1.500 1.500 0 0 1 19 3v15a1.500 1.500 0 0 1-1.500 1.500H13" />
                <rect x="1" y="7" width="12" height="12.500" rx="1.500" />
              </svg>
              <svg width="20" height="6" viewBox="0 0 20 6" fill="#3b3b3b">
                <circle cx="3" cy="3" r="2.300" />
                <circle cx="10" cy="3" r="2.300" />
                <circle cx="17" cy="3" r="2.300" />
              </svg>
              <X size={22} strokeWidth={1.800} />
            </DevTools2>
          </DevBar>
          <FilterBar>
            <svg width="17" height="20" viewBox="0 0 17 20" fill="none" stroke="#3b3b3b" strokeWidth="1.800">
              <path d="M1 4h15M6 4V1.500h5V4M3 4l1 14.500h9L14 4M6.800 7v8M10.200 7v8" />
            </svg>
            <DevSep />
            <FilterText>
              <svg width="14" height="14" viewBox="0 0 14 14" fill="#e0e0e2" stroke="#8a8a8a">
                <path d="M1 1h12L8.500 7v6l-3-2V7z" />
              </svg>
              Filter Output
            </FilterText>
            <DevSep $right={-3} />
            <GearWrap>
              <svg width="22" height="22" viewBox="0 0 24 24" fill="none" stroke="#3b3b3b" strokeWidth="3">
                <circle cx="12" cy="12" r="5" />
                <path d="M12 1.500v4M12 18.500v4M1.500 12h4M18.500 12h4M4.500 4.500l3 3M16.500 16.500l3 3M19.500 4.500l-3 3M7.500 16.500l-3 3" />
              </svg>
            </GearWrap>
          </FilterBar>
          <LevelBar>
            <Level>Errors</Level>
            <Level>Warnings</Level>
            <Level>Info</Level>
            <Level>Logs</Level>
            <Level>Debug</Level>
            <LevelSep />
            <Net $gap={14}>CSS</Net>
            <Net>XHR</Net>
            <Net>Requests</Net>
          </LevelBar>
          <Output>
            <XhrLine clipped method="PROPFIND" url="https://nextcloud.danielittlewood.xyz/" code="404" ms="317ms" />
            <XhrLine method="PROPFIND" url="https://nextcloud.danielittlewood.xyz/" code="404" ms="323ms" />
            <Row $kind="log">
              <Msg>No realtime provider, setting document's content directly</Msg>
              <Source>cristal-main.js:946:236501</Source>
            </Row>
            <XhrLine method="MKCOL" url="https://nextcloud.danielittlewood.xyz/" code="405" ms="266ms" />
            <Row $kind="error">
              <StateIcon>
                <ErrorDot />
              </StateIcon>
              <ErrorLine>
                <SmallTwisty />
                Could not set content on vue page view component
              </ErrorLine>
              <Source>cristal-main.js:359:23937</Source>
            </Row>
            <Row $kind="error">
              <StateIcon>
                <ErrorDot />
              </StateIcon>
              <ErrorLine>
                <SmallTwisty />
                Uncaught Error: Extension not found
              </ErrorLine>
              <Stack>
                {frames.map(([fn, file]) => (
                  <React.Fragment key={fn}>
                    <span>{fn}</span>
                    <FrameFile>{file}</FrameFile>
                  </React.Fragment>
                ))}
              </Stack>
              <Caused>
                Caused by: <Blue>Object {'{'} … {'}'}</Blue>
              </Caused>
              <Source>cristal-main.js:848:2258</Source>
            </Row>
            <Row $kind="warn">
              <StateIcon>
                <WarnIcon />
              </StateIcon>
              <Msg>An error occurred in the &lt;OXn&gt; component.</Msg>
              <Msg>&nbsp;</Msg>
              <Msg>Consider adding an error boundary to your tree to customize error handling behavior.</Msg>
              <Msg>
                Visit <PlainLink>https://react.dev/link/error-boundaries</PlainLink> to learn more about error boundaries.
              </Msg>
              <Source>cristal-main.js:1052:22357</Source>
            </Row>
            <Row $kind="log">
              <Msg>BlockNoteView is being unmounted, disconnecting from the realtime provider...</Msg>
              <Source>cristal-main.js:946:236610</Source>
            </Row>
            <Scrollbar />
          </Output>
          <PromptBar>
            <ChevronsRight size={22} strokeWidth={2} />
            <SplitIcon>
              <svg width="20" height="18" viewBox="0 0 20 18" fill="none" stroke="#3b3b3b" strokeWidth="1.800">
                <rect x="1" y="1" width="18" height="16" rx="2.500" />
                <path d="M9 1v16M3.500 5H6M3.500 8H6" />
              </svg>
              <BlueDot />
            </SplitIcon>
          </PromptBar>
        </Devtools>
      </Body>

      <Toast>
        <ToastHead>
          <svg width="16" height="16" viewBox="0 0 16 16" fill="none" stroke="#a4a3a9" strokeWidth="1.500">
            <path d="M5 14H3a2 2 0 0 1-2-2V3a2 2 0 0 1 2-2h8a2 2 0 0 1 2 2v2" />
            <rect x="6" y="6" width="9" height="9" rx="2" fill="#a4a3a9" stroke="none" />
            <circle cx="10.500" cy="10.500" r="2" fill="#57565c" stroke="none" />
          </svg>
          <ToastApp>Screenshot</ToastApp>
          <ToastTime>Just now</ToastTime>
        </ToastHead>
        <ToastClose>
          <X size={13} strokeWidth={3} />
        </ToastClose>
        <ToastBody>
          <Thumb width="48" height="27" viewBox="0 0 48 27">
            <rect width="48" height="27" fill="#fff" />
            <rect width="48" height="1" fill="#000" />
            <rect y="1" width="48" height="2" fill="#e4e4e8" />
            <rect y="4" width="35" height="2" fill="#0069a3" />
            <rect x="0" y="6" width="6" height="21" fill="#f3f3f3" />
            <rect x="10" y="11" width="24" height="2" fill="#eee" />
            <rect x="35" y="4" width="13" height="23" fill="#fdf2d0" />
            <rect x="36" y="8" width="8" height="1" fill="#c9a227" />
            <rect x="36" y="14" width="9" height="1" fill="#c05050" />
            <rect x="36" y="22" width="10" height="1" fill="#7050c0" />
          </Thumb>
          <ToastText>
            <b>Screenshot captured</b>
            You can paste the image from the clipboard.
          </ToastText>
        </ToastBody>
      </Toast>
    </Screen>
  );
}
